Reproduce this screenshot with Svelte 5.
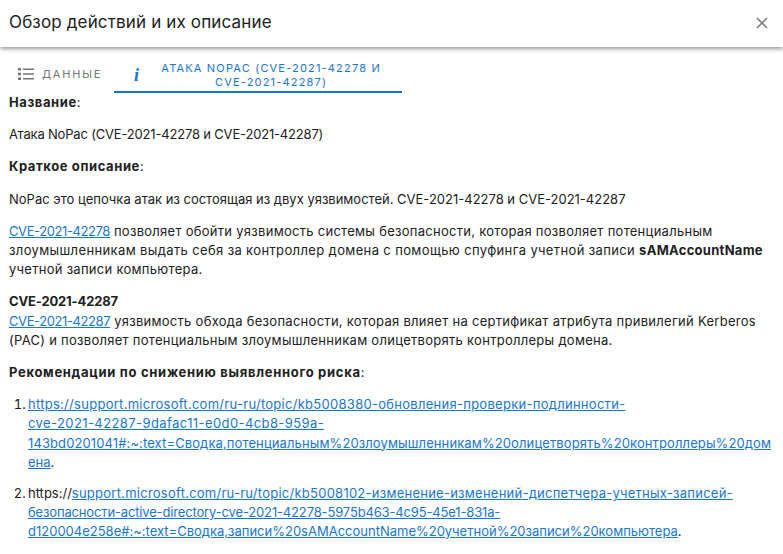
<script>
    const title = "Обзор действий и их описание"
</script>

<div class="dialog">
    <header class="dialog-head">
        <h2>{title}</h2>
        <button class="close" aria-label="Закрыть">
            <svg viewBox="0 0 14 14" width="14" height="14">
                <path d="M2 2l10 10M12 2L2 12" fill="none" stroke="#757575" stroke-width="1.5" />
            </svg>
        </button>
    </header>

    <div class="tabs">
        <button class="tab data">
            <svg viewBox="0 0 16 14" width="16" height="14">
                <path
                    d="M0 1h3v2.4H0zM5 1.4h11v1.6H5zM0 5.8h3v2.4H0zM5 6.2h11v1.6H5zM0 10.6h3V13H0zM5 11h11v1.6H5z"
                    fill="#757575"
                />
            </svg>
            <span>Данные</span>
        </button>
        <button class="tab active">
            <i class="info">i</i>
            <span>Атака NoPac (CVE-2021-42278 и CVE-2021-42287)</span>
        </button>
    </div>

    <div class="content">
        <p><b>Название</b>:</p>
        <p class="ls-n2">Атака NoPac (CVE-2021-42278 и CVE-2021-42287)</p>
        <p><b>Краткое описание</b>:</p>
        <p>NoPac это цепочка атак из состоящая из двух уязвимостей. CVE-2021-42278 и CVE-2021-42287</p>
        <p class="ls3">
            <a class="ls-n4" href="#a">CVE-2021-42278</a> позволяет обойти уязвимость системы безопасности, которая позволяет потенциальным<br />
            <span class="ls37">злоумышленникам выдать себя за контроллер домена с помощью спуфинга учетной записи</span> <b class="ls3">sAMAccountName</b><br />
            учетной записи компьютера.
        </p>
        <p class="ls3">
            <b class="ls-n1">CVE-2021-42287</b><br />
            <a class="ls-n4" href="#b">CVE-2021-42287</a> уязвимость обхода безопасности, которая влияет на сертификат атрибута привилегий Kerberos<br />
            (PAC) и позволяет потенциальным злоумышленникам олицетворять контроллеры домена.
        </p>
        <p><b class="heading">Рекомендации по снижению выявленного риска</b>:</p>
        <ol>
            <li>
                <a href="#c"><span class="ls3">https://support.microsoft.com/ru-ru/topic/kb5008380-обновления-проверки-подлинности-</span><br />
                <span class="ls4">cve-2021-42287-9dafac11-e0d0-4cb8-959a-</span><br />
                <span class="ls1">143bd0201041#:~:text=Сводка,потенциальным%20злоумышленникам%20олицетворять%20контроллеры%20дом</span><br />
                ена</a>.
            </li>
            <li>
                https://<a href="#d"><span class="ls25">support.microsoft.com/ru-ru/topic/kb5008102-изменение-изменений-диспетчера-учетных-записей-</span><br />
                <span class="ls-n1">безопасности-active-directory-cve-2021-42278-5975b463-4c95-45e1-831a-</span><br />
                d120004e258e#:~:text=Сводка,записи%20sAMAccountName%20учетной%20записи%20компьютера</a>.
            </li>
        </ol>
    </div>
</div>

<style>
    :global(body) {
        background: #fff;
    }

    .dialog {
        height: 554px;
        overflow: hidden;
        color: #212121;
        font-family: Inter, "Noto Sans", sans-serif;
        font-size: 13px;
        line-height: 19.2px;
    }

    .dialog-head {
        height: 47px;
        display: flex;
        align-items: center;
        justify-content: space-between;
        padding: 0 14px 2px 9px;
        box-sizing: border-box;
        position: relative;
        box-shadow: 0 2px 4px rgba(0, 0, 0, 0.4);
    }

    h2 {
        margin: 0;
        font-size: 17px;
        font-weight: 400;
        letter-spacing: 0.15px;
    }

    .close {
        display: flex;
        padding: 0;
        border: none;
        background: none;
    }

    .tabs {
        display: flex;
        height: 46px;
    }

    .tab {
        display: flex;
        align-items: center;
        border: none;
        background: none;
        font: inherit;
        font-size: 11px;
        line-height: 14px;
        text-transform: uppercase;
        color: #757575;
    }

    .data {
        width: 114px;
        padding: 8px 0 0 18px;
        gap: 8px;
        box-sizing: border-box;
        letter-spacing: 1.8px;
    }

    .active {
        width: 288px;
        box-sizing: border-box;
        color: #1976d2;
        border-bottom: 2px solid #1976d2;
        padding: 12px 18px 0 20px;
        gap: 18px;
        letter-spacing: 1.18px;
    }

    .info {
        font-family: "Liberation Serif", serif;
        font-weight: 700;
        font-size: 18px;
        text-transform: none;
    }

    .content {
        padding: 0 9px;
    }

    p {
        margin: 0 0 13px;
    }

    a {
        color: #1976d2;
    }

    b {
        font-weight: 700;
        letter-spacing: 0.6px;
    }

    b.heading {
        letter-spacing: 0.7px;
    }

    ol {
        margin: 0;
        padding-left: 19px;
    }

    li {
        margin-bottom: 12px;
    }

    li::marker {
        content: counter(list-item) ".\2009";
    }

    /* Inter runs narrower than the original face, line ends are evened out here */
    .ls-n4 { letter-spacing: -0.4px; }
    .ls-n2 { letter-spacing: -0.18px; }
    b.ls-n1, .ls-n1 { letter-spacing: -0.15px; }
    .ls1 { letter-spacing: 0.11px; }
    .ls25 { letter-spacing: 0.25px; }
    b.ls3, .ls3 { letter-spacing: 0.28px; }
    .ls37 { letter-spacing: 0.37px; }
    .ls4 { letter-spacing: 0.41px; }
</style>
